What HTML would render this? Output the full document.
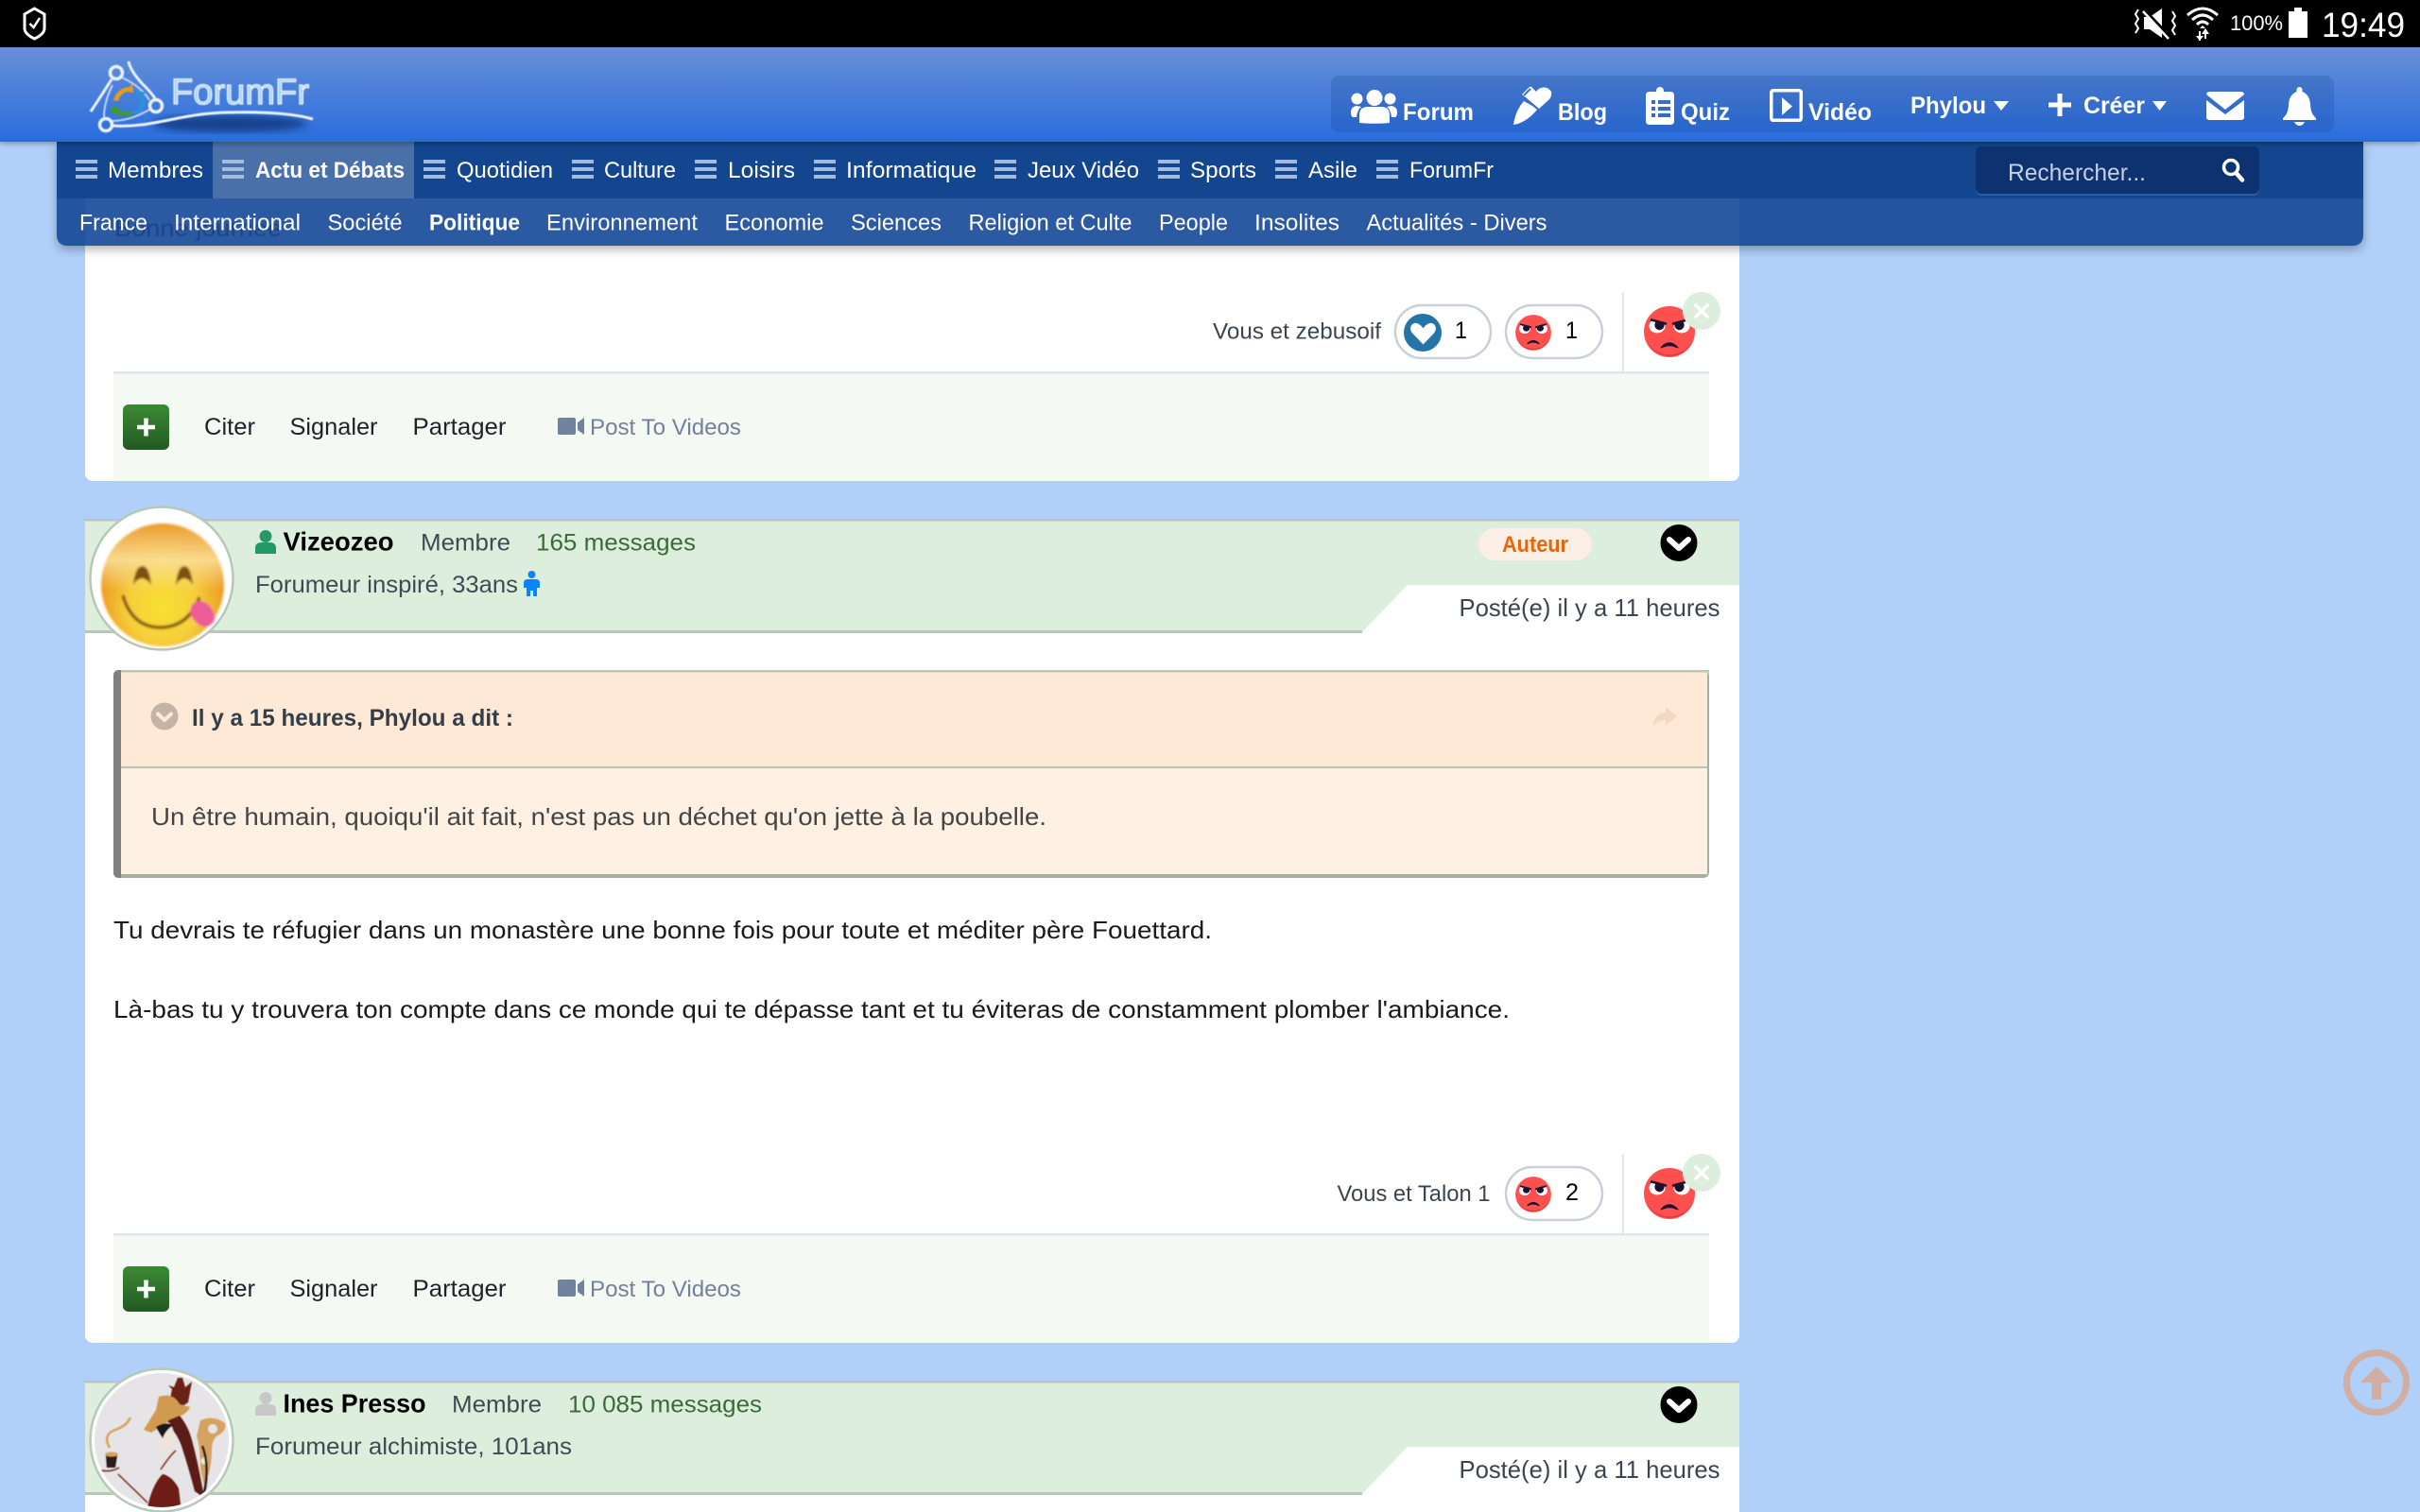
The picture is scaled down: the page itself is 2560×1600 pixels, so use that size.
<!DOCTYPE html>
<html lang="fr"><head><meta charset="utf-8"><title>ForumFr</title>
<style>
html,body{margin:0;padding:0;width:2560px;height:1600px;overflow:hidden;background:#b0d0f9}
svg{display:block;position:absolute;left:0;top:0}
text{font-family:"Liberation Sans",sans-serif;white-space:pre}
.n{font-size:24px;fill:#fff}
.nb{font-size:24px;fill:#fff;font-weight:bold}
.m{font-size:25px;fill:#fff;font-weight:bold}
.f{font-size:25px;fill:#1c2228}
.v{font-size:24px;fill:#72829c}
.s{font-size:24px;fill:#3a4550}
.c{font-size:25px;fill:#000}
.u{font-size:28px;font-weight:bold;fill:#000}
.g{font-size:25px;fill:#3c4c54}
.h{font-size:25px;fill:#3a6a3a}
.t{font-size:26px;fill:#1a1a1a}
.p{font-size:26px;fill:#3a4550}
</style></head><body>
<svg width="2560" height="1600" viewBox="0 0 2560 1600" xmlns="http://www.w3.org/2000/svg">
<defs>
<linearGradient id="bar" x1="0" y1="0" x2="0" y2="1"><stop offset="0" stop-color="#6690d7"/><stop offset="1" stop-color="#2a6cdd"/></linearGradient>
<linearGradient id="btn" x1="0" y1="0" x2="0" y2="1"><stop offset="0" stop-color="#3c8a36"/><stop offset="1" stop-color="#235a24"/></linearGradient>
<radialGradient id="emo" gradientUnits="userSpaceOnUse" cx="172" cy="642" r="82"><stop offset="0" stop-color="#f8e032"/><stop offset=".45" stop-color="#f6cf3c"/><stop offset=".78" stop-color="#ed9f22"/><stop offset="1" stop-color="#de7a12"/></radialGradient>
<linearGradient id="emotop" x1="0" y1="0" x2="0" y2="1"><stop offset="0" stop-color="#ee9e2c" stop-opacity=".95"/><stop offset=".3" stop-color="#fbe6a0" stop-opacity=".85"/><stop offset=".55" stop-color="#fbe8a0" stop-opacity="0"/></linearGradient>
<clipPath id="av3"><circle cx="171" cy="1524" r="71"/></clipPath>
<filter id="bl"><feGaussianBlur stdDeviation="4"/></filter>
<filter id="bls"><feGaussianBlur stdDeviation=".5"/></filter>
<filter id="ble"><feGaussianBlur stdDeviation="1.2"/></filter>
<g id="ham"><rect x="0" y="0" width="23" height="4" fill="#a4bbdd"/><rect x="0" y="8" width="23" height="4" fill="#a4bbdd"/><rect x="0" y="16" width="23" height="4" fill="#a4bbdd"/></g>
<g id="angry">
<circle r="27" fill="#ff5050"/>
<path d="M-25 9A27 27 0 0 0 25 9A28 28 0 0 1 -25 9Z" fill="#dd3838"/>
<ellipse cx="-13" cy="-6" rx="8.500" ry="7.500" fill="#fff"/><ellipse cx="13" cy="-6" rx="8.500" ry="7.500" fill="#fff"/>
<circle cx="-10.500" cy="-7" r="5.200" fill="#1b1230"/><circle cx="10.500" cy="-7" r="5.200" fill="#1b1230"/>
<path d="M-22 -13.500L-3 -8.500L-3 -19L-18 -19Z" fill="#ff5050"/><path d="M22 -13.500L3 -8.500L3 -19L18 -19Z" fill="#ff5050"/>
<path d="M-19 -12.500L-4 -8.500M19 -12.500L4 -8.500" stroke="#1b1230" stroke-width="2.500" stroke-linecap="round"/>
<path d="M-9 17Q0 7 9 17Q0 12 -9 17Z" fill="#1b1230" stroke="#1b1230" stroke-width="1.500"/>
</g>
<g id="chev"><circle r="19.500" fill="#000"/><path d="M-10 -3.500L0 5.500L10 -3.500" fill="none" stroke="#fff" stroke-width="6" stroke-linecap="round" stroke-linejoin="round"/></g>
<g id="xb"><circle r="20" fill="#deeedc"/><path d="M-6 -6L6 6M6 -6L-6 6" stroke="#fff" stroke-width="3.500" stroke-linecap="round"/></g>
<g id="plusbtn"><rect x="130" y="428" width="49" height="48" rx="6" fill="url(#btn)"/><path d="M154.500 442.500V461.500M145 452H164" stroke="#fff" stroke-width="4.500"/></g>
<g id="cam" fill="#72829c"><rect x="590" y="442" width="19" height="18" rx="2"/><path d="M611 447L618 442V460L611 455Z"/></g>
<g id="usr"><circle cx="281" cy="567.500" r="6.500"/><path d="M270 586V580Q270 574 277 574H285Q292 574 292 580V586Z"/></g>
</defs>

<rect width="2560" height="1600" fill="#b0d0f9"/>

<!-- Post 1 bottom -->
<rect x="90" y="140" width="1750" height="369" rx="8" fill="#fff"/>
<rect x="120" y="393" width="1688" height="116" fill="#f4f9f3"/>
<rect x="120" y="393" width="1688" height="2.500" fill="#e1e7e2"/>
<rect x="1716" y="309" width="2" height="84" fill="#e4e8e6"/>
<text class="s" x="1283" y="358.500" textLength="178" lengthAdjust="spacingAndGlyphs">Vous et zebusoif</text>
<rect x="1476" y="323" width="101" height="56" rx="28" fill="#fff" stroke="#c8d0dc" stroke-width="2.500"/>
<circle cx="1505" cy="352" r="20" fill="#2474a8"/>
<path d="M1505.500 364.500L1494 352.500C1489 346 1495 340 1500 342.500C1503 344 1504.500 346 1505.500 347.500C1506.500 346 1508 344 1511 342.500C1516 340 1522 346 1517 352.500Z" fill="#fff"/>
<text class="c" x="1539" y="358" textLength="13" lengthAdjust="spacingAndGlyphs">1</text>
<rect x="1593" y="323" width="102" height="56" rx="28" fill="#fff" stroke="#c8d0dc" stroke-width="2.500"/>
<use href="#angry" transform="translate(1622 352) scale(.7)"/>
<text class="c" x="1656" y="358" textLength="13" lengthAdjust="spacingAndGlyphs">1</text>
<use href="#angry" transform="translate(1766 351)"/>
<use href="#xb" transform="translate(1800 329)"/>
<use href="#plusbtn"/>
<text class="f" x="216" y="460" textLength="54" lengthAdjust="spacingAndGlyphs">Citer</text>
<text class="f" x="306.500" y="460" textLength="93" lengthAdjust="spacingAndGlyphs">Signaler</text>
<text class="f" x="436.500" y="460" textLength="99" lengthAdjust="spacingAndGlyphs">Partager</text>
<use href="#cam"/>
<text class="v" x="624" y="460" textLength="160" lengthAdjust="spacingAndGlyphs">Post To Videos</text>

<!-- Post 2 -->
<rect x="90" y="549" width="1750" height="872" rx="8" fill="#fff"/>
<path d="M90 549H1840V619H1489L1441 669H90Z" fill="#deeedc"/>
<rect x="90" y="549" width="1750" height="2.500" fill="#b8c8b8"/>
<rect x="90" y="667" width="1351" height="3" fill="#b8c8b8"/>
<circle cx="171" cy="612" r="75.500" fill="#fff" stroke="#b8c8b8" stroke-width="2.500"/>
<g filter="url(#ble)">
<circle cx="172" cy="619" r="65" fill="url(#emo)"/>
<circle cx="172" cy="619" r="65" fill="url(#emotop)"/>
<path d="M141 619Q143 599 150.500 599Q158 599 160 619Q150 605 141 619Z" fill="#80500f"/>
<path d="M186 619Q188 599 195 599Q202 599 204 619Q195 605 186 619Z" fill="#80500f"/>
<path d="M130 630Q140 665 172 664Q200 662 211 632" fill="none" stroke="#80500f" stroke-width="3.500"/>
<path d="M203 640Q210 632 220 639Q230 650 226 658Q218 668 208 659Q198 650 203 640Z" fill="#ee5c98"/>
</g>
<use href="#usr" fill="#229966"/>
<text class="u" x="299.500" y="582.500" textLength="117" lengthAdjust="spacingAndGlyphs">Vizeozeo</text>
<text class="g" x="445" y="582.500" textLength="95" lengthAdjust="spacingAndGlyphs">Membre</text>
<text class="h" x="567" y="582.500" textLength="169" lengthAdjust="spacingAndGlyphs">165 messages</text>
<text class="g" x="270" y="627" textLength="278" lengthAdjust="spacingAndGlyphs">Forumeur inspiré, 33ans</text>
<g fill="#0a84ff"><circle cx="562.500" cy="608" r="4"/><path d="M558 613H567Q571 613 571 617V622H568V631H564V625H561V631H557V622H554V617Q554 613 558 613Z"/></g>
<rect x="1564" y="559" width="120" height="34" rx="17" fill="#fcefe6"/>
<text x="1589" y="584" font-size="24" font-weight="bold" fill="#e8660a" textLength="70" lengthAdjust="spacingAndGlyphs">Auteur</text>
<use href="#chev" transform="translate(1776 574.500)"/>
<text class="p" x="1543.500" y="652" textLength="276" lengthAdjust="spacingAndGlyphs">Posté(e) il y a 11 heures</text>

<!-- Quote -->
<rect x="120" y="709" width="1688" height="220" rx="6" fill="#a4b0a4"/>
<rect x="128" y="711" width="1678" height="100" fill="#fee9d6"/>
<rect x="128" y="709" width="1680" height="2.500" fill="#b8c8b8"/>
<rect x="128" y="811" width="1678" height="2" fill="#b8c4b4"/>
<rect x="128" y="813" width="1678" height="112" fill="#fff0e4"/>
<path d="M128 709H126Q120 709 120 715V923Q120 929 126 929H128Z" fill="#808080"/>
<circle cx="174" cy="758" r="14.500" fill="#c4b4a8"/>
<path d="M167 755.500L174 762L181 755.500" fill="none" stroke="#fee9d6" stroke-width="4" stroke-linecap="round" stroke-linejoin="round"/>
<text x="203" y="768" font-size="25" font-weight="bold" fill="#333f48" textLength="340" lengthAdjust="spacingAndGlyphs">Il y a 15 heures, Phylou a dit :</text>
<path d="M1774 758L1762 748V754C1754 754 1749 760 1749 769C1752 764 1756 762 1762 762V768Z" fill="#f3d9c3"/>
<text x="160" y="873" font-size="26" fill="#444" textLength="947" lengthAdjust="spacingAndGlyphs">Un être humain, quoiqu'il ait fait, n'est pas un déchet qu'on jette à la poubelle.</text>

<text class="t" x="120" y="993" textLength="1162" lengthAdjust="spacingAndGlyphs">Tu devrais te réfugier dans un monastère une bonne fois pour toute et méditer père Fouettard.</text>
<text class="t" x="120" y="1077" textLength="1477" lengthAdjust="spacingAndGlyphs">Là-bas tu y trouvera ton compte dans ce monde qui te dépasse tant et tu éviteras de constamment plomber l'ambiance.</text>

<rect x="120" y="1305" width="1688" height="116" fill="#f4f9f3"/>
<rect x="120" y="1305" width="1688" height="2.500" fill="#e1e7e2"/>
<rect x="1716" y="1221" width="2" height="84" fill="#e4e8e6"/>
<text class="s" x="1414.500" y="1271" textLength="162" lengthAdjust="spacingAndGlyphs">Vous et Talon 1</text>
<rect x="1593" y="1235" width="102" height="56" rx="28" fill="#fff" stroke="#c8d0dc" stroke-width="2.500"/>
<use href="#angry" transform="translate(1622 1264) scale(.7)"/>
<text class="c" x="1656" y="1270" textLength="14" lengthAdjust="spacingAndGlyphs">2</text>
<use href="#angry" transform="translate(1766 1263)"/>
<use href="#xb" transform="translate(1800 1241)"/>
<use href="#plusbtn" y="912"/>
<text class="f" x="216" y="1372" textLength="54" lengthAdjust="spacingAndGlyphs">Citer</text>
<text class="f" x="306.500" y="1372" textLength="93" lengthAdjust="spacingAndGlyphs">Signaler</text>
<text class="f" x="436.500" y="1372" textLength="99" lengthAdjust="spacingAndGlyphs">Partager</text>
<use href="#cam" y="912"/>
<text class="v" x="624" y="1372" textLength="160" lengthAdjust="spacingAndGlyphs">Post To Videos</text>

<!-- Post 3 -->
<rect x="90" y="1461" width="1750" height="150" fill="#fff"/>
<path d="M90 1461H1840V1531H1489L1441 1581H90Z" fill="#deeedc"/>
<rect x="90" y="1461" width="1750" height="2.500" fill="#b8c8b8"/>
<rect x="90" y="1579" width="1351" height="3" fill="#b8c8b8"/>
<circle cx="171" cy="1524" r="75.500" fill="#fff" stroke="#b8c8b8" stroke-width="2.500"/>
<circle cx="171" cy="1524" r="71" fill="#e6e4e6"/>
<g clip-path="url(#av3)" filter="url(#bls)">
<path d="M180 1480L182 1470L178 1466L184 1468L188 1458L193 1458L196 1468L203 1462L199 1484L190 1490Z" fill="#6a2018"/>
<path d="M152 1513Q160 1500 165 1492L168 1478Q183 1473 190 1486L201 1489Q198 1497 182 1502L160 1516Z" fill="#d09a50"/>
<path d="M178 1503L190 1498Q200 1510 204 1528Q210 1550 216 1585L206 1578Q200 1555 192 1530Q186 1514 178 1510Z" fill="#5c1a16"/>
<path d="M166 1512Q170 1506 180 1506Q188 1520 180 1530Q174 1538 166 1530Q165 1522 168 1518Z" fill="#efe4dc"/>
<path d="M165 1510Q174 1504 184 1508Q176 1512 172 1522Q168 1516 165 1510Z" fill="#1a1414"/>
<path d="M155 1600Q160 1572 172 1560Q182 1562 189 1575L192 1600Z" fill="#6e1c18"/>
<path d="M170 1555Q180 1540 186 1535" fill="none" stroke="#8a3028" stroke-width="1.500"/>
<path d="M212 1503Q226 1497 238 1506Q240 1514 232 1518Q224 1522 224 1534Q224 1556 216 1572L212 1555Q212 1530 208 1520Z" fill="#d6a25e"/>
<circle cx="225" cy="1512" r="5" fill="#e6e4e6"/><circle cx="216" cy="1546" r="3.500" fill="#f0e8dc"/>
<path d="M214 1530Q222 1550 216 1580" fill="none" stroke="#201412" stroke-width="2.500"/>
<path d="M112 1540H124L122 1553H113Z" fill="#2a1a14"/><ellipse cx="118" cy="1539" rx="7" ry="2.500" fill="#d6a25e"/>
<path d="M116 1532Q108 1518 122 1513Q134 1509 138 1500" fill="none" stroke="#d6a25e" stroke-width="2.500"/>
<path d="M107 1556Q118 1558 126 1553M125 1560L156 1590" fill="none" stroke="#7a2c20" stroke-width="1.500"/>
</g>
<use href="#usr" y="912" fill="#c8c8c8"/>
<text class="u" x="299.500" y="1494.500" textLength="151" lengthAdjust="spacingAndGlyphs">Ines Presso</text>
<text class="g" x="478" y="1494.500" textLength="95" lengthAdjust="spacingAndGlyphs">Membre</text>
<text class="h" x="601" y="1494.500" textLength="205" lengthAdjust="spacingAndGlyphs">10 085 messages</text>
<text class="g" x="270" y="1539" textLength="335" lengthAdjust="spacingAndGlyphs">Forumeur alchimiste, 101ans</text>
<use href="#chev" transform="translate(1776 1486.500)"/>
<text class="p" x="1543.500" y="1564" textLength="276" lengthAdjust="spacingAndGlyphs">Posté(e) il y a 11 heures</text>

<!-- Scroll up -->
<g fill="#d0aea4"><path fill-rule="evenodd" d="M2514 1428a35 35 0 1 0 .01 0ZM2514 1435a28 28 0 1 1 -.01 0Z"/><path d="M2514 1446L2530 1462Q2530 1463 2528 1463H2519V1481H2509V1463H2500Q2498 1463 2498 1462Z"/></g>

<!-- Nav -->
<g style="filter:drop-shadow(0 4px 5px rgba(0,0,0,.3))">
<path d="M60 150H2500V248Q2500 260 2488 260H72Q60 260 60 248Z" fill="#2354a0"/>
</g>
<path d="M90 210H1840V260H90Z" fill="#2c5aa2"/>
<text x="121" y="250" font-size="25" fill="#1c4688" textLength="177" lengthAdjust="spacingAndGlyphs">Bonne journée</text>
<rect x="60" y="150" width="2440" height="60" fill="#14458f"/>
<rect x="225" y="150" width="213" height="60" fill="#4a70aa"/>
<use href="#ham" x="80" y="169"/><text class="n" x="114" y="188" textLength="101" lengthAdjust="spacingAndGlyphs">Membres</text>
<use href="#ham" x="235" y="169"/><text class="nb" x="270" y="188" textLength="158" lengthAdjust="spacingAndGlyphs">Actu et Débats</text>
<use href="#ham" x="448" y="169"/><text class="n" x="483" y="188" textLength="102" lengthAdjust="spacingAndGlyphs">Quotidien</text>
<use href="#ham" x="605" y="169"/><text class="n" x="639" y="188" textLength="76" lengthAdjust="spacingAndGlyphs">Culture</text>
<use href="#ham" x="735" y="169"/><text class="n" x="770" y="188" textLength="71" lengthAdjust="spacingAndGlyphs">Loisirs</text>
<use href="#ham" x="861" y="169"/><text class="n" x="895" y="188" textLength="138" lengthAdjust="spacingAndGlyphs">Informatique</text>
<use href="#ham" x="1052" y="169"/><text class="n" x="1087" y="188" textLength="118" lengthAdjust="spacingAndGlyphs">Jeux Vidéo</text>
<use href="#ham" x="1225" y="169"/><text class="n" x="1259" y="188" textLength="70" lengthAdjust="spacingAndGlyphs">Sports</text>
<use href="#ham" x="1349" y="169"/><text class="n" x="1384" y="188" textLength="52" lengthAdjust="spacingAndGlyphs">Asile</text>
<use href="#ham" x="1456" y="169"/><text class="n" x="1491" y="188" textLength="89" lengthAdjust="spacingAndGlyphs">ForumFr</text>

<rect x="2090" y="157" width="300" height="50" rx="6" fill="#2a5aa8"/>
<rect x="2090" y="155" width="300" height="50" rx="6" fill="#0e3270"/>
<text x="2124" y="191" font-size="25" fill="#c6d0e0" textLength="146" lengthAdjust="spacingAndGlyphs">Rechercher...</text>
<circle cx="2360" cy="177" r="7.500" fill="none" stroke="#fff" stroke-width="3.500"/><path d="M2365.500 183L2372 190.500" stroke="#fff" stroke-width="4.500" stroke-linecap="round"/>

<text class="n" x="84" y="243.500" textLength="72" lengthAdjust="spacingAndGlyphs">France</text>
<text class="n" x="184" y="243.500" textLength="134" lengthAdjust="spacingAndGlyphs">International</text>
<text class="n" x="346.500" y="243.500" textLength="79" lengthAdjust="spacingAndGlyphs">Société</text>
<text class="nb" x="454" y="243.500" textLength="96" lengthAdjust="spacingAndGlyphs">Politique</text>
<text class="n" x="578" y="243.500" textLength="160" lengthAdjust="spacingAndGlyphs">Environnement</text>
<text class="n" x="766.500" y="243.500" textLength="105" lengthAdjust="spacingAndGlyphs">Economie</text>
<text class="n" x="900" y="243.500" textLength="96" lengthAdjust="spacingAndGlyphs">Sciences</text>
<text class="n" x="1024.500" y="243.500" textLength="173" lengthAdjust="spacingAndGlyphs">Religion et Culte</text>
<text class="n" x="1226" y="243.500" textLength="73" lengthAdjust="spacingAndGlyphs">People</text>
<text class="n" x="1327" y="243.500" textLength="90" lengthAdjust="spacingAndGlyphs">Insolites</text>
<text class="n" x="1445.500" y="243.500" textLength="191" lengthAdjust="spacingAndGlyphs">Actualités - Divers</text>

<!-- App bar -->
<g style="filter:drop-shadow(0 2px 3px rgba(0,0,0,.3))"><rect x="0" y="50" width="2560" height="100" fill="url(#bar)"/></g>
<rect x="1408" y="80" width="1061" height="60" rx="9" fill="#0a3a8c" opacity=".2"/>

<!-- Logo -->
<ellipse cx="243" cy="131" rx="82" ry="9" fill="#15438e" filter="url(#bl)"/>
<g filter="url(#bls)">
<g fill="none" stroke="#e8f2fc">
<circle cx="123" cy="77" r="6.500" stroke-width="3.500"/><circle cx="165" cy="112" r="6.500" stroke-width="3.500"/><circle cx="112" cy="132" r="6.500" stroke-width="3.500"/>
<path d="M136 65Q138 75 150 88Q160 98 164 104" stroke-width="3"/>
<path d="M118 84Q108 100 96 118" stroke-width="3"/>
<path d="M129 82Q150 92 158 106M119 90Q110 108 110 124M118 128Q138 128 158 116" stroke-width="2" opacity=".75"/>
<path d="M119 133C160 136 190 120 240 119C280 118 310 120 331 126" stroke-width="3"/>
</g>
<path d="M120 106Q124 93 137 92L140 88L141 98L135 97Q128 98 125 107Z" fill="#ec9a1e"/>
<path d="M118 113L117 118Q122 123 134 122L138 125L139 117L134 118Q125 118 122 112Z" fill="#3f9a30"/>
<path d="M143 95L146 102Q150 108 145 116L138 120L149 120Q156 110 152 100L155 98Z" fill="#2a92dc"/>
<text x="181" y="110" font-size="38" fill="#a8d2f4" stroke="#e4f2fc" stroke-width="1.300" textLength="146" lengthAdjust="spacingAndGlyphs">ForumFr</text>
</g>

<!-- Menu right -->
<g fill="#fff">
<circle cx="1454" cy="103.500" r="8.500"/><circle cx="1435.500" cy="104.500" r="6"/><circle cx="1470.500" cy="104.500" r="6"/>
<path d="M1438 130V122Q1438 113 1447 113H1461Q1470 113 1470 122V130Q1454 131.500 1438 130Z"/>
<path d="M1429 119Q1429 113 1435 112L1440 113Q1436 116 1435 124H1431Q1429 123 1429 119Z"/>
<path d="M1478 119Q1478 113 1472 112L1467 113Q1471 116 1472 124H1476Q1478 123 1478 119Z"/>
<path d="M1601 132Q1603 117 1612 107L1621 112L1626 116Q1617 127 1606 131ZM1610 100L1618 92Q1620 91 1621 93L1625 97Q1627 94 1630 93Q1637 91 1641 97Q1642 102 1638 106L1628 115L1614 103Z"/>
<path d="M1619 94L1612 101" stroke="#3a72c8" stroke-width="2"/>
<path fill-rule="evenodd" d="M1745 97H1752Q1752 92 1756 92Q1760 92 1760 97H1767Q1771 97 1771 101V128Q1771 132 1767 132H1745Q1741 132 1741 128V101Q1741 97 1745 97ZM1747 106v4h4v-4ZM1754 106v4h13v-4ZM1747 113v4h4v-4ZM1754 113v4h13v-4ZM1747 120v4h4v-4ZM1754 120v4h13v-4Z"/>
<rect x="1873.800" y="95.800" width="31.500" height="31.500" rx="2" fill="none" stroke="#fff" stroke-width="3.500"/>
<path d="M1885 103L1896 112.500L1885 122Z"/>
<path d="M2109 107H2125L2117 117Z"/><path d="M2277 107H2292L2284.500 117Z"/>
<rect x="2167" y="108.500" width="24" height="5"/><rect x="2176.500" y="99" width="5" height="24"/>
<path d="M2334 100Q2334 97 2338 97H2370Q2374 97 2374 100L2354 116Z"/>
<path d="M2334 106L2354 121L2374 106V124Q2374 127 2370 127H2338Q2334 127 2334 124Z"/>
<path d="M2432.500 92a3 3 0 0 1 3 3V97Q2443 100 2444 110Q2444 120 2450 125V127H2415V125Q2421 120 2421 110Q2422 100 2429.500 97V95a3 3 0 0 1 3 -3Z"/>
<path d="M2427 129H2438Q2436 133 2432.500 133Q2429 133 2427 129Z"/>
</g>
<text class="m" x="1484" y="127" textLength="75" lengthAdjust="spacingAndGlyphs">Forum</text>
<text class="m" x="1648" y="127" textLength="52" lengthAdjust="spacingAndGlyphs">Blog</text>
<text class="m" x="1778" y="127" textLength="52" lengthAdjust="spacingAndGlyphs">Quiz</text>
<text class="m" x="1913" y="127" textLength="67" lengthAdjust="spacingAndGlyphs">Vidéo</text>
<text class="m" x="2021" y="120" textLength="80" lengthAdjust="spacingAndGlyphs">Phylou</text>
<text class="m" x="2204" y="120" textLength="65" lengthAdjust="spacingAndGlyphs">Créer</text>

<!-- Status bar -->
<rect x="0" y="0" width="2560" height="50" fill="#000"/>
<path d="M36.500 9L47 15V30Q47 36 36.500 41Q26 36 26 30V15Z" fill="none" stroke="#fff" stroke-width="3"/>
<path d="M31.500 25L35.500 29L42 19" fill="none" stroke="#fff" stroke-width="2.500"/>
<g fill="none" stroke="#fff" stroke-width="2">
<path d="M2262 10L2259 15L2262 20L2259 25L2262 30L2259 35"/>
<path d="M2298 12L2301 17L2298 22L2301 27L2298 32L2301 37"/>
</g>
<path d="M2268 18H2274L2287 9V40L2274 31H2268Z" fill="#fff"/>
<path d="M2267 10L2296 41" stroke="#000" stroke-width="5"/><path d="M2267 12L2294 41" stroke="#fff" stroke-width="2.500"/>
<g fill="none" stroke="#fff" stroke-width="3">
<path d="M2314 16Q2330 2 2346 16"/><path d="M2319 21Q2330 11 2341 21"/><path d="M2324 26Q2330 20 2336 26"/>
</g>
<path d="M2330 27l3 3h-6Z" fill="#fff"/>
<path d="M2327 33V43M2333 31V41" stroke="#fff" stroke-width="2"/>
<path d="M2323 38l4 5l4 -5ZM2329 36l4 -6l4 6Z" fill="#fff"/>
<text x="2359" y="32" font-size="22" fill="#fff" textLength="56" lengthAdjust="spacingAndGlyphs">100%</text>
<path d="M2427 8H2435V12H2441V40H2421V12H2427Z" fill="#fff"/>
<text x="2456" y="39" font-size="37" fill="#fff" textLength="88" lengthAdjust="spacingAndGlyphs">19:49</text>
</svg>
</body></html>
